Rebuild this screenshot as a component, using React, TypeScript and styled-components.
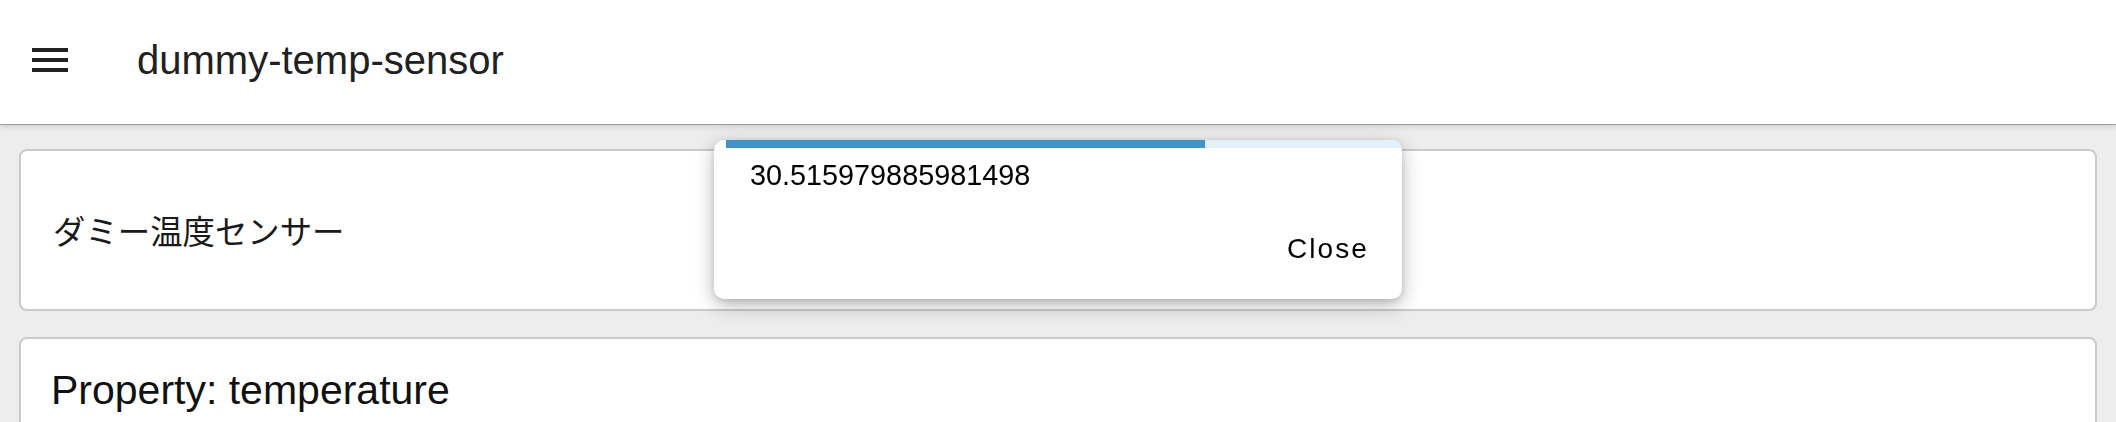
import styled, { createGlobalStyle } from "styled-components";

const GlobalStyle = createGlobalStyle`
  html, body {
    margin: 0;
    padding: 0;
    background: #ededed;
    font-family: "Liberation Sans", Arial, sans-serif;
  }
`;

const MenuIcon = () => (
  <svg width="48" height="48" viewBox="0 0 24 24" fill="currentColor">
    <path d="M3 18h18v-2H3v2zm0-5h18v-2H3v2zm0-7v2h18V6H3z" />
  </svg>
);

type TToastProps = {
  message: string;
  progress: number;
};

const Toast = ({ message, progress }: TToastProps) => (
  <StyledToast>
    <Track>
      <Bar $progress={progress} />
    </Track>
    <ToastBody>{message}</ToastBody>
    <ToastActions>
      <CloseButton type="button">Close</CloseButton>
    </ToastActions>
  </StyledToast>
);

const App = () => {
  return (
    <>
      <GlobalStyle />
      <Header>
        <IconButton type="button" aria-label="menu">
          <MenuIcon />
        </IconButton>
        <Title>dummy-temp-sensor</Title>
      </Header>
      <Main>
        <Card $center>
          <Description>ダミー温度センサー</Description>
        </Card>
        <Card>
          <PropertyTitle>Property: temperature</PropertyTitle>
        </Card>
      </Main>
      <Toast message="30.515979885981498" progress={70.9} />
    </>
  );
};

const Header = styled.header`
  display: flex;
  align-items: center;
  box-sizing: border-box;
  height: 124px;
  padding: 0 0 4px 26px;
  background: #fff;
  color: #212121;
  box-shadow: 0 1px 0 rgba(0, 0, 0, 0.28), 0 3px 6px rgba(0, 0, 0, 0.12);
  position: relative;
  z-index: 1;
`;

const IconButton = styled.button`
  display: flex;
  padding: 0;
  border: 0;
  background: none;
  color: #212121;
`;

const Title = styled.h1`
  margin: 0 0 0 63px;
  font-size: 40px;
  font-weight: 400;
  line-height: normal;
`;

const Main = styled.main`
  display: flex;
  flex-direction: column;
  gap: 26px;
  padding: 25px 19px 0;
`;

const Card = styled.section<{ $center?: boolean }>`
  box-sizing: border-box;
  display: flex;
  align-items: ${(p) => (p.$center ? "center" : "flex-start")};
  height: ${(p) => (p.$center ? "162px" : "auto")};
  min-height: 120px;
  padding: ${(p) => (p.$center ? "0 32px" : "27px 30px")};
  background: #fff;
  border: 2px solid #cbcbcb;
  border-radius: 8px;
`;

const Description = styled.p`
  margin: 0;
  font-family: "Noto Sans CJK JP", "Liberation Sans", sans-serif;
  font-size: 32.4px;
  line-height: 48px;
  color: #1a1a1a;
`;

const PropertyTitle = styled.h2`
  margin: 0;
  font-size: 41px;
  font-weight: 400;
  line-height: 1.2;
  color: #111;
`;

const StyledToast = styled.div`
  position: fixed;
  top: 140px;
  left: 50%;
  transform: translateX(-50%);
  width: 688px;
  display: flex;
  flex-direction: column;
  background: #fff;
  border-radius: 10px;
  overflow: hidden;
  box-shadow: 0 6px 20px rgba(0, 0, 0, 0.28), 0 2px 6px rgba(0, 0, 0, 0.12);
  z-index: 2;
`;

const Track = styled.div`
  height: 8px;
  margin-left: 12px;
  background: #e5eff8;
`;

const Bar = styled.div<{ $progress: number }>`
  height: 100%;
  width: ${(p) => p.$progress}%;
  background: #4293c8;
`;

const ToastBody = styled.div`
  padding: 11px 36px 0;
  font-size: 28.8px;
  line-height: normal;
  color: #000;
`;

const ToastActions = styled.div`
  display: flex;
  justify-content: flex-end;
  padding: 41px 33px 34px 0;
`;

const CloseButton = styled.button`
  padding: 0;
  border: 0;
  background: none;
  font-family: "Liberation Sans", Arial, sans-serif;
  font-size: 28px;
  line-height: normal;
  letter-spacing: 2.1px;
  color: #000;
`;

export default App;
